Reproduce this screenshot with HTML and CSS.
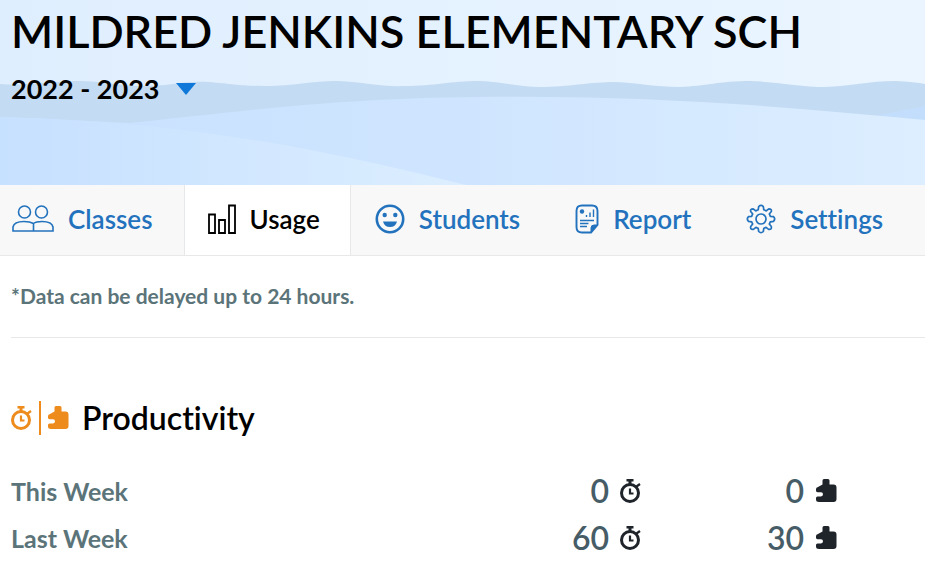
FILE: index.html
```html
<!DOCTYPE html>
<html lang="en">
<head>
    <meta charset="UTF-8">
    <meta name="viewport" content="width=device-width, initial-scale=1.0">
    <title>Usage</title>
    <link rel="stylesheet" href="styles.css">
</head>
<body>
    <svg class="symbols" aria-hidden="true">
        <symbol id="timer" viewBox="0 0 22 26">
            <circle cx="10" cy="15" r="8.5" fill="none" stroke="currentColor" stroke-width="3"/>
            <path d="M6.5 1h7v2.5h-2V6h-3V3.500h-2z" fill="currentColor"/>
            <path d="M16.500 8.500l3.500-2.500M10 10.500v5h3.500" fill="none" stroke="currentColor" stroke-width="2.200"/>
        </symbol>
        <symbol id="puzzle" viewBox="0 0 22 26">
            <path d="M7.500 6.500V2.500Q7.500 1 9 1h4q1.500 0 1.500 1.500v4h4q3 0 3 3V21q0 3-3 3H4q-3 0-3-2.500V20q0-1.500 1.500-1.500h3.500q2-.3 2-2.200t-2-2.100H2.500Q1 14 1 12.800V11q0-1.500 2-2z" fill="currentColor"/>
        </symbol>
    </svg>

    <header class="header">
        <svg class="waves" viewBox="0 0 925 185" preserveAspectRatio="none" aria-hidden="true">
            <defs>
                <linearGradient id="sky"><stop offset="0" stop-color="#dfeefe"/><stop offset="1" stop-color="#eaf5ff"/></linearGradient>
                <linearGradient id="hill"><stop offset="0" stop-color="#c8e1ff"/><stop offset=".5" stop-color="#cfe5ff"/><stop offset="1" stop-color="#dceeff"/></linearGradient>
                <linearGradient id="front"><stop offset="0" stop-color="#c6e0ff"/><stop offset="1" stop-color="#dceeff"/></linearGradient>
            </defs>
            <path fill="url(#sky)" d="M0 0h925v185H0z"/>
            <path fill="#c3dbf3" d="M0 84C25 86 45 82 75 81C110 81 120 87 150 86C175 85 185 81 208 82C235 84 240 86 265 86C295 86 310 81 338 81C365 82 380 87 405 86C435 86 450 81 480 81C505 82 515 87 545 87C575 86 590 82 615 82C640 83 655 87 680 87C705 86 720 81 750 81C780 82 800 87 825 87C850 86 870 81 895 81Q915 82 925 84V140H0z"/>
            <path fill="#c3defc" d="M875 116Q900 111 925 106V130H875z"/>
            <path fill="url(#hill)" d="M0 117Q70 120 130 123C230 113 330 98 480 97C650 95 790 107 925 120V185H0z"/>
            <path fill="url(#front)" d="M0 117C190 122 320 149 466 185H0z"/>
        </svg>
        <h1>MILDRED JENKINS ELEMENTARY SCH</h1>
        <div class="year">
            <select class="year-select" aria-label="School year">
                <option>2022 - 2023</option>
            </select>
            <svg class="caret" width="20" height="12" viewBox="0 0 20 12" aria-hidden="true"><path d="M0 0h20L10 12z" fill="#0f78d8"/></svg>
        </div>
    </header>

    <nav class="tabs">
        <a class="tab" href="#classes">
            <svg width="42" height="28" viewBox="0 0 42 28" fill="none" stroke="currentColor" stroke-width="1.600">
                <circle cx="12.500" cy="7" r="6"/><circle cx="29.500" cy="7" r="6"/>
                <path d="M1 26v-4q1-5.500 11-5.500 6 0 9.500 2Q24 16.500 30 16.500q10 0 11 5.500v4zM21.500 18v8"/>
            </svg>
            Classes
        </a>
        <a class="tab active" href="#usage" aria-current="page">
            <svg width="28" height="30" viewBox="0 0 28 30" fill="none" stroke="currentColor" stroke-width="1.800">
                <path d="M1 10.500h6V29H1zM11 16h6v13h-6zM21 1.500h6V29h-6z"/>
            </svg>
            Usage
        </a>
        <a class="tab" href="#students">
            <svg width="30" height="30" viewBox="0 0 30 30" fill="currentColor">
                <circle cx="15" cy="15" r="13.200" fill="none" stroke="currentColor" stroke-width="2.600"/>
                <circle cx="9.700" cy="11" r="2.200"/><circle cx="20.300" cy="11" r="2.200"/>
                <path d="M8 17.500h14q-1.500 5.500-7 5.500t-7-5.500z"/>
            </svg>
            Students
        </a>
        <a class="tab" href="#report">
            <svg width="24" height="30" viewBox="0 0 24 30" fill="none" stroke="currentColor" stroke-width="1.900">
                <path d="M16 28.500H7q-5.500 0-5.500-5.500V7Q1.500 1.500 7 1.500h10q5.500 0 5.500 5.500v14z"/>
                <path d="M16 28v-4q0-3 3-3h3.500z" fill="currentColor" stroke-width="1"/>
                <circle cx="7" cy="7.500" r="2.200" fill="currentColor" stroke="none"/>
                <path d="M11.500 11v2M15 8.500V13M18.500 5.500V13M5 16.500h14M5 19.500h8.500M5 22.500h7" stroke-width="1.400"/>
            </svg>
            Report
        </a>
        <a class="tab" href="#settings">
            <svg width="30" height="30" viewBox="0 0 30 30" fill="none" stroke="currentColor" stroke-width="1.700" stroke-linejoin="round">
                <circle cx="15" cy="15" r="5"/>
                <path d="M12.700 2.500Q15 .2 17.300 2.500L17.800 5.800Q19 6.200 20.200 6.900L22.800 4.800Q26 4.800 25.300 7.500L23.300 10Q24 11 24.300 12.300L27.500 12.700Q29.800 15 27.500 17.300L24.300 17.800Q24 19 23.300 20L25.300 22.600Q26 25.700 22.600 25.300L20.100 23.300Q19 24 17.800 24.300L17.300 27.500Q15 29.800 12.700 27.500L12.200 24.300Q11 24 9.900 23.300L7.400 25.300Q4 25.700 4.700 22.600L6.700 20Q6 19 5.700 17.800L2.500 17.300Q.2 15 2.500 12.700L5.700 12.300Q6 11 6.700 10L4.700 7.500Q4 4.800 7.200 4.800L9.800 6.900Q11 6.200 12.200 5.800z"/>
            </svg>
            Settings
        </a>
    </nav>

    <main class="content">
        <p class="note">*Data can be delayed up to 24 hours.</p>
        <section>
            <h2>
                <span class="pair">
                    <svg width="22" height="26"><use href="#timer"/></svg>
                    <span class="bar"></span>
                    <svg width="22" height="26"><use href="#puzzle"/></svg>
                </span>
                Productivity
            </h2>
            <table class="stats">
                <tr>
                    <th scope="row">This Week</th>
                    <td><span class="value">0 <svg width="22" height="26"><use href="#timer"/></svg></span></td>
                    <td><span class="value">0 <svg width="22" height="26"><use href="#puzzle"/></svg></span></td>
                </tr>
                <tr>
                    <th scope="row">Last Week</th>
                    <td><span class="value">60 <svg width="22" height="26"><use href="#timer"/></svg></span></td>
                    <td><span class="value">30 <svg width="22" height="26"><use href="#puzzle"/></svg></span></td>
                </tr>
            </table>
        </section>
    </main>
</body>
</html>
```
FILE: styles.css
```css
* {
    box-sizing: border-box;
}
body {
    margin: 0;
    font-family: Lato, sans-serif;
    font-weight: 600;
    font-variant-ligatures: none;
    color: #000;
    background: #fff;
}
.symbols {
    display: none;
}
.header {
    position: relative;
    padding: 3px 11px 78px;
}
.waves {
    position: absolute;
    top: 0;
    left: 0;
    width: 100%;
    height: 100%;
    z-index: -1;
}
h1 {
    margin: 0;
    font-size: 45px;
    font-weight: 600;
    line-height: 56px;
    white-space: nowrap;
}
.year {
    display: inline-grid;
    align-items: center;
    margin-top: 12px;
}
.year-select {
    grid-area: 1 / 1;
    appearance: none;
    height: 36px;
    border: 0;
    padding: 0 36px 0 0;
    background: none;
    font: 700 27px/36px Lato, sans-serif;
    color: #000;
}
.caret {
    grid-area: 1 / 1;
    justify-self: end;
    pointer-events: none;
}
.tabs {
    display: flex;
    background: #f8f8f8;
    border-bottom: 1px solid #e6e8ea;
}
.tab {
    display: flex;
    align-items: center;
    gap: 14px;
    height: 70px;
    padding: 0 30px 2px 23px;
    border: solid transparent;
    border-width: 0 1px;
    font-size: 26px;
    color: #2372bd;
    text-decoration: none;
}
.tab:first-child {
    padding-left: 11px;
}
.tab.active {
    color: #000;
    background: #fff;
    border-color: #e6e8ea;
}
.content {
    padding-left: 11px;
}
.note {
    margin: 0;
    padding: 25px 0 27px;
    border-bottom: 1px solid #e6e8ea;
    font-size: 21px;
    font-weight: 700;
    line-height: 29px;
    color: #5b7479;
}
h2 {
    display: flex;
    align-items: center;
    gap: 13px;
    margin: 60px 0 29px;
    font-size: 32px;
    font-weight: 600;
    line-height: 40px;
}
.pair {
    display: flex;
    align-items: center;
    gap: 6px;
    color: #ed8b1c;
}
.bar {
    width: 2px;
    height: 34px;
    background: #ed8b1c;
}
.stats {
    width: calc(100% - 88px);
    border-collapse: collapse;
}
.stats th {
    padding: 0;
    font-size: 25px;
    font-weight: 700;
    text-align: left;
    color: #5b7479;
}
.stats td {
    width: 195px;
    height: 47px;
    padding: 0;
    font-size: 32px;
    color: #465c66;
}
.value {
    display: flex;
    align-items: center;
    justify-content: flex-end;
    gap: 11px;
}
.value svg {
    color: #1f242b;
}
```
